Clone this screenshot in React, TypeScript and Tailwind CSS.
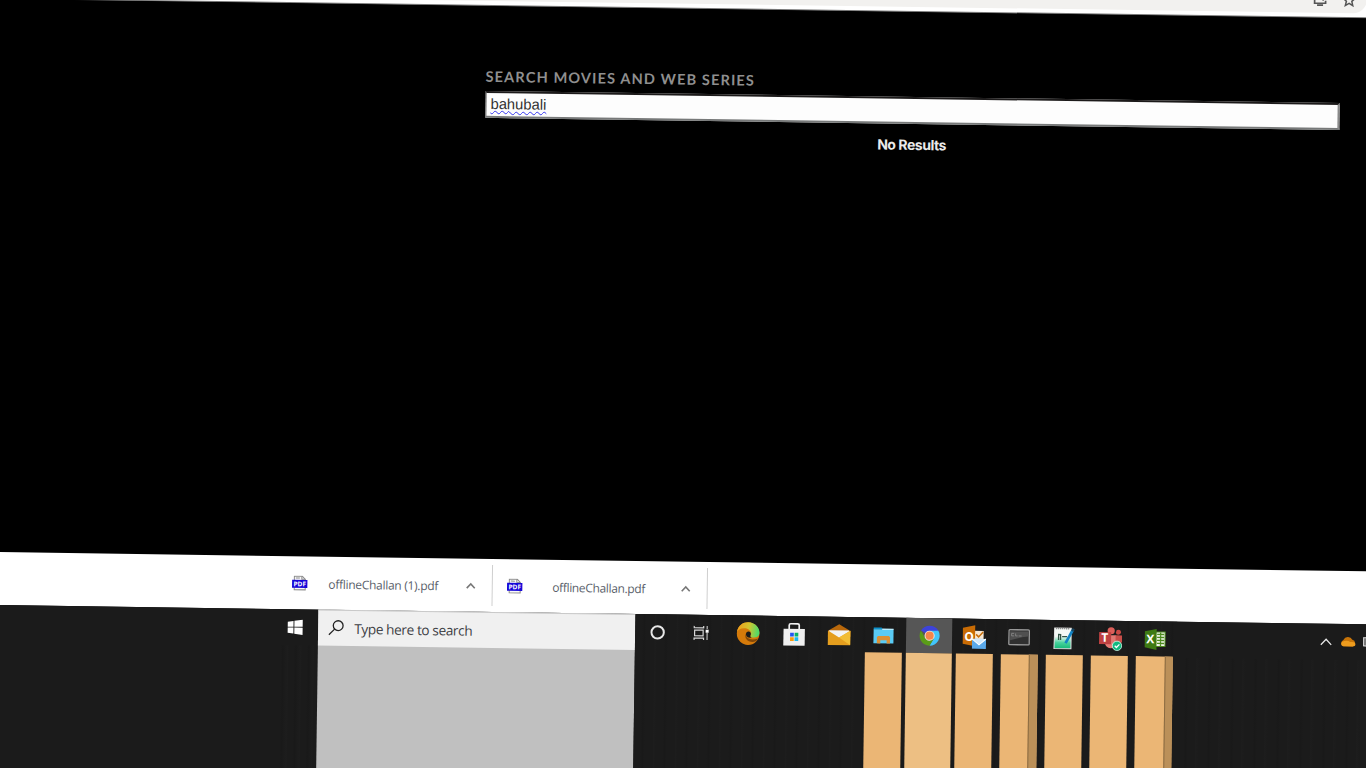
import type { ReactNode } from "react";

function Svg({ w, h, box, children }: { w: number; h: number; box?: string; children: ReactNode }) {
  return (
    <svg width={w} height={h} viewBox={box ?? `0 0 ${w} ${h}`} fill="none" className="block shrink-0">
      {children}
    </svg>
  );
}

function PdfIcon() {
  return (
    <span className="relative block h-[16px] w-[16px] shrink-0">
      <Svg w={16} h={16}>
        <path d="M2.500 5V1h8l3 3V14.500h-11z" fill="#fafafa" stroke="#8b8b8b" />
        <path d="M10 1v3h3.500M4 2.800h4" stroke="#8b8b8b" />
        <path d="M.3 4.500h15.400v8H.3z" fill="#1606d8" />
      </Svg>
      <span className="absolute inset-x-0 top-[4px] text-center text-[6.500px] leading-[9px] font-bold tracking-normal text-white">PDF</span>
    </span>
  );
}

function Chevron({ light }: { light?: boolean }) {
  return (
    <Svg w={12} h={8}>
      <path d={light ? "M.8 7 6 1.400 11.200 7" : "M2 6.500 6 2.200l4 4.300"} stroke={light ? "#e6e6e6" : "#777"} strokeWidth={light ? 1.3 : 1.6} />
    </Svg>
  );
}

const Cortana = () => (
  <Svg w={17} h={16}><circle cx="7.500" cy="8" r="6.200" stroke="#e8e8e8" strokeWidth="2" /></Svg>
);

const TaskView = () => (
  <span className="mr-[4px]">
    <Svg w={16} h={16}>
      <path d="M1 1v1.800h9.500V1M1 15v-1.800h9.500V15M1.500 5.200h8.500v5.600H1.500z" stroke="#d8d8d8" strokeWidth="1.200" />
      <path d="M14 1v3M14 8v7" stroke="#bcbcbc" strokeWidth="1.200" />
      <path d="M12.500 4.700h3v3h-3z" fill="#fff" />
    </Svg>
  </span>
);

const Edge = () => (
  <Svg w={24} h={24}>
    <defs>
      <linearGradient id="edgeTop" x1="2" y1="8" x2="22" y2="11" gradientUnits="userSpaceOnUse">
        <stop stopColor="#eca11e" /><stop offset=".5" stopColor="#d2c52f" /><stop offset="1" stopColor="#50da68" />
      </linearGradient>
    </defs>
    <circle cx="12" cy="12" r="11.300" fill="#d57a0a" />
    <path d="M10 11.500c-1.200 4.200 3.500 8.300 12 5.200-1.500 2.600-3.300 3.500-5.500 3.700C11.500 20.300 7.500 16.500 10 11.500z" fill="#844807" />
    <path d="M.8 10.500C2 4 6.500.7 12 .7c6.500 0 11.300 4.800 11.300 10.200 0 3.600-2.800 4.900-5.800 4.900-2.200 0-3.500-.6-3.200-1.500.6-.8.900-1.700.7-2.900C14.500 8.500 11.300 6.700 8 6.700c-3.500 0-6 1.500-7.200 3.800z" fill="url(#edgeTop)" />
    <path d="M9.800 12.300c.4-3 3.700-3.300 4.800-1 .6 1.600-.6 2.500-.4 3.500.3.500.8.800 1.500 1-3.500.7-5.900-.8-5.900-3.500z" fill="#1b1b1b" />
  </Svg>
);

const Store = () => (
  <Svg w={22} h={24}>
    <path d="M6 8V3q0-1.500 1.500-1.500h7Q16 1.500 16 3v5" stroke="#f2f2f2" strokeWidth="1.700" />
    <path d="M.3 6.500h21.400v16.800H.3z" fill="#efefef" />
    <path d="M7 10.500h3.700v3.700H7z" fill="#2256f2" /><path d="M11.500 10.500h3.700v3.700h-3.700z" fill="#08b36a" />
    <path d="M7 15h3.700v3.700H7z" fill="#fa9d0d" /><path d="M11.500 15h3.700v3.700h-3.700z" fill="#18b9f4" />
  </Svg>
);

const Mail = () => (
  <Svg w={24} h={24}>
    <path d="M.8 8 12 1.200 23.200 8v6H.8z" fill="#b9680b" />
    <path d="M2 7.500h20v9H2z" fill="#f3f3f3" />
    <path d="M.8 7.700 12 14.500l11.200-6.800v14.500H.8z" fill="#e59e1e" />
    <path d="M12 14.500 23.200 7.700v14.500z" fill="#f2bd35" />
  </Svg>
);

const Explorer = () => (
  <Svg w={21} h={18}>
    <path d="M.4 1h8l1.500 2.200H.4z" fill="#0d91cb" />
    <path d="M.4 2.800h20v14H.4z" fill="#5acbf5" /><path d="M9 2h11.400v1.400H9z" fill="#b7ecfd" />
    <path d="M3.800 16.900v-6.400l1.300-1.100h10.600l1.300 1.100v6.400h-3.400v-3.200H7.300v3.200z" fill="#dc9136" />
  </Svg>
);

const Chrome = () => (
  <Svg w={21} h={21} box="0 0 24 24">
    <path d="M12 12 2.050 6.250A11.500 11.500 0 0 1 21.950 6.250z" fill="#3d43d9" />
    <path d="M12 6.250h9.950A11.500 11.500 0 0 1 12 23.500l4.980-8.600z" fill="#42c5fb" />
    <path d="M2.050 6.250 7 14.900 12 17.700 17 14.900 12 23.500A11.500 11.500 0 0 1 2.050 6.250z" fill="#5a9c18" />
    <circle cx="12" cy="12" r="5.800" fill="#f2e8e4" /><circle cx="12" cy="12" r="4.700" fill="#f5854b" />
  </Svg>
);

function Outlook() {
  return (
    <span className="relative block h-[24px] w-[24px]">
      <Svg w={24} h={24}>
        <path d="M11 6h10.500v10H11z" fill="#f8e8d4" /><path d="m14 9.500 2.500 2.500 4.500-5" stroke="#c66e0a" strokeWidth="1.500" />
        <path d="m.7 3 12.300-2.500v21L.7 19z" fill="#c96c05" />
        <path d="M10 14h14v10H10z" fill="#5aa9ea" /><path d="m10 14 7 6 7-6" fill="#d3eafc" stroke="#fff" />
      </Svg>
      <span className="absolute top-[4px] left-[2px] text-[12px] leading-[15px] font-bold text-white">O</span>
    </span>
  );
}

const Console = () => (
  <Svg w={22} h={18}>
    <rect x=".8" y="1.300" width="20.400" height="15" rx="1" fill="#303030" stroke="#999" strokeWidth="1.300" />
    <path d="M2 3h18v5Q11 9 2 12z" fill="#505050" /><path d="M3.500 5h2.500M3.500 5v2.500H6M7.500 5v2.500h2M10.500 7.500h3" stroke="#8c8c8c" strokeWidth=".8" />
  </Svg>
);

const Editor = () => (
  <Svg w={22} h={24}>
    <defs><linearGradient id="page" x1="0" y1="2" x2="0" y2="23" gradientUnits="userSpaceOnUse"><stop offset=".4" stopColor="#f4f8f5" /><stop offset=".7" stopColor="#46d29b" /><stop offset="1" stopColor="#12b875" /></linearGradient></defs>
    <path d="M1.500 2h16.500v20.500h-17z" fill="url(#page)" stroke="#e5e5e5" />
    <path d="M3 2.500h14" stroke="#777" strokeDasharray="1 1" strokeWidth="1.500" />
    <path d="M5.500 14V8.500h2V14M9 10.500h5" stroke="#315345" strokeWidth="1.300" />
    <path d="m12.500 17 7-13" stroke="#1284c5" strokeWidth="2.700" /><path d="m19 5 1.500-2.500" stroke="#16445f" strokeWidth="2.500" />
  </Svg>
);

function Teams() {
  return (
    <span className="relative block h-[24px] w-[24px]">
      <Svg w={24} h={24}>
        <circle cx="13" cy="4" r="3.600" fill="#dc5e59" /><circle cx="20.300" cy="5.300" r="2.500" fill="#c94945" />
        <path d="M7 8.500h11v7.500a5.500 5.500 0 0 1-11 0z" fill="#e27973" /><path d="M17.500 8.500H24v6q-1 4-6.500 3z" fill="#c84e49" />
        <path d="M1 5.500h12v12H1z" fill="#bd4141" />
        <circle cx="19" cy="19" r="4.700" fill="#12b981" stroke="#d9fff1" strokeWidth=".8" /><path d="m16.700 19 1.700 1.700 3-3.200" stroke="#fff" strokeWidth="1.300" />
      </Svg>
      <span className="absolute top-[4px] left-[1px] w-[12px] text-center text-[12px] leading-[14px] font-bold text-white">T</span>
    </span>
  );
}

function Excel() {
  return (
    <span className="relative block h-[22px] w-[22px]">
      <Svg w={22} h={22}>
        <path d="M11 3.500h10v14.500H11z" fill="#eef5e8" stroke="#4d8a1e" />
        <path d="M13 6h7M13 9h7M13 12h7M13 15h7M16.500 4v13.500" stroke="#4d8a1e" strokeWidth="1.300" />
        <path d="M.7 3 12.500.5v21L.7 19z" fill="#3d7a13" />
      </Svg>
      <span className="absolute top-[4px] left-[2.500px] text-[12px] leading-[14px] font-bold text-white">X</span>
    </span>
  );
}

type App = { name: string; icon: ReactNode; bar?: "plain" | "active" | "stacked" };

const apps: App[] = [
  { name: "cortana", icon: <Cortana /> },
  { name: "taskview", icon: <TaskView /> },
  { name: "edge", icon: <Edge /> },
  { name: "store", icon: <Store /> },
  { name: "mail", icon: <Mail /> },
  { name: "explorer", icon: <Explorer />, bar: "plain" },
  { name: "chrome", icon: <Chrome />, bar: "active" },
  { name: "outlook", icon: <Outlook />, bar: "plain" },
  { name: "console", icon: <Console />, bar: "stacked" },
  { name: "editor", icon: <Editor />, bar: "plain" },
  { name: "teams", icon: <Teams />, bar: "plain" },
  { name: "excel", icon: <Excel />, bar: "stacked" },
];

function AppColumn({ app }: { app: App }) {
  const active = app.bar === "active";
  return (
    <div className="flex w-[45.170px] shrink-0 flex-col">
      <div className={`flex h-[35px] items-center justify-center pt-[1px] ${active ? "bg-[#565656]" : ""}`}>{app.icon}</div>
      {app.bar && (
        <div className={`flex flex-1 ${active ? "bg-[#edbf83]" : "mx-[4px] bg-[#ebb675]"}`}>
          {app.bar === "stacked" && <div className="ml-auto w-[8.500px] border-l border-[#8b6b42] bg-[#bb9059]" />}
        </div>
      )}
    </div>
  );
}

export default function App() {
  return (
    <div className="h-screen w-full overflow-hidden bg-black">
      <div className="-mt-[40px] -ml-[20px] flex h-[840px] w-[1430px] origin-[20px_40px] rotate-[0.81deg] flex-col font-['Open_Sans','Noto_Sans',sans-serif]">
        <header className="flex h-[38.800px] shrink-0 flex-col border-b border-[#777] bg-white pb-[4px]">
          <div className="flex w-[1387px] flex-1 items-end justify-end gap-[15px] rounded-br-[14px] bg-[#f2f1ef] pr-[11.500px] pb-[6px]">
            <Svg w={14} h={14}>
              <path d="M6 2H1.500v8.500h11V8M4 12.500h6" stroke="#555" strokeWidth="1.700" /><path d="M10 1v6M7.500 5 10 7.500 12.500 5" stroke="#555" strokeWidth="1.300" />
            </Svg>
            <Svg w={14} h={14}>
              <path d="m7 1 1.700 4 4.300.4-3.300 2.800 1 4.300L7 10.200l-3.700 2.300 1-4.300L1 5.400 5.300 5z" stroke="#555" strokeWidth="1.500" />
            </Svg>
          </div>
        </header>

        <main className="flex h-[553.700px] shrink-0 flex-col bg-black pt-[61.500px] pl-[506.600px]">
          <label className="h-[23.500px] font-[Lato,sans-serif] text-[14.600px] leading-[20px] font-bold tracking-[1.100px] text-[#8f8f8f]">
            SEARCH MOVIES AND WEB SERIES
          </label>
          <div className="flex h-[27px] w-[854.500px] items-center border border-t-2 border-t-[#1c1a1a] border-r-2 border-r-[#8a8a8a] border-b-2 border-b-[#777979] border-l-[#777] bg-[#fdfdfd] pl-[4.300px] font-['Liberation_Sans',sans-serif] text-[14.800px] leading-[20px] text-[#333]">
            <span className="underline decoration-[#3535ee] decoration-wavy decoration-[1px] underline-offset-[1px] [text-decoration-skip-ink:none]">bahubali</span>
          </div>
          <p className="mt-[11.500px] w-[854px] text-center font-[Inter,sans-serif] text-[14px] leading-[20px] font-bold tracking-[-0.450px] text-[#eaeaea]">
            No Results
          </p>
        </main>

        <section className="flex h-[52.500px] shrink-0 items-center bg-white pl-[320px] text-[12px] tracking-[-0.280px] text-[#5b5f6b]">
          <div className="flex h-[41px] w-[200.500px] items-center border-r border-[#cfcfcf]">
            <PdfIcon />
            <span className="mt-[2px] ml-[20.500px] w-[130px] whitespace-nowrap">offlineChallan (1).pdf</span>
            <span className="ml-[6px]"><Chevron /></span>
          </div>
          <div className="flex h-[41px] w-[215px] items-center border-r border-[#cfcfcf] pl-[14.500px]">
            <PdfIcon />
            <span className="mt-[2px] ml-[29.500px] w-[121px] whitespace-nowrap tracking-[-0.340px]">offlineChallan.pdf</span>
            <span className="ml-[6px]"><Chevron /></span>
          </div>
        </section>

        <footer className="flex flex-1 bg-[#1b1b1b]">
          <div className="flex w-[346.600px] shrink-0 flex-col items-end">
            <div className="flex h-[36px] items-center pr-[14.500px]">
              <Svg w={16} h={16}>
                <path d="M.5 2.500 6.300 1.700v5.800H.5zM7.200 1.500 15.500.4v7.100H7.200zM.5 8.400h5.800v5.900l-5.800-.8zM7.200 8.400h8.300v7.200l-8.300-1.100z" fill="#fff" />
              </Svg>
            </div>
            <div className="mr-[4px] w-[38px] flex-1 bg-[repeating-linear-gradient(90deg,#1b1b1b_0px,#1b1b1b_5px,#191919_7px,#1b1b1b_9px,#1d1d1d_12px,#1b1b1b_13px)]" />
          </div>
          <div className="flex w-[317px] shrink-0 flex-col bg-[#c0c0c0]">
            <div className="flex h-[36px] items-center gap-[10.500px] border-t border-[#c9c9c9] bg-[#f0f0f0] pl-[10px] text-[13.700px] tracking-[-0.420px] text-[#3e3f45]">
              <Svg w={16} h={16}>
                <circle cx="10" cy="5.800" r="4.900" stroke="#222" strokeWidth="1.300" /><path d="M6.500 9.300.8 15" stroke="#222" strokeWidth="1.300" />
              </Svg>
              <span className="pt-[1.500px] whitespace-nowrap">Type here to search</span>
            </div>
          </div>
          <div className="flex shrink-0 bg-[repeating-linear-gradient(90deg,#1b1b1b_0px,#1b1b1b_7px,#191919_9px,#1b1b1b_11px,#1b1b1b_19px,#1d1d1d_20px,#1b1b1b_22px)] pl-[.900px]">
            {apps.map((app) => <AppColumn key={app.name} app={app} />)}
          </div>
          <div className="flex flex-1 flex-col">
            <div className="flex h-[36px] items-center pl-[142.300px]">
              <Chevron light />
              <span className="ml-[8px]">
                <Svg w={16} h={11}>
                  <path d="M3.500 10.200A3.300 3.300 0 0 1 3.300 4a5 5 0 0 1 9-.5 3.500 3.500 0 0 1 .5 6.700z" fill="#c87408" />
                  <path d="M3 10.200a2.500 2.500 0 0 1-.8-4.500q5-2 8 .2 5-.8 5.200 2 0 2.300-3 2.300z" fill="#ed9c1e" />
                </Svg>
              </span>
              <span className="ml-[7px] h-[9px] w-[14px] border border-[#d0d0d0] bg-[#777]" />
            </div>
            <div className="flex-1 bg-[repeating-linear-gradient(90deg,#1b1b1b_0px,#1b1b1b_8px,#191919_10px,#1b1b1b_12px,#1b1b1b_19px,#1d1d1d_20px,#1b1b1b_23px)]" />
          </div>
        </footer>
      </div>
    </div>
  );
}
